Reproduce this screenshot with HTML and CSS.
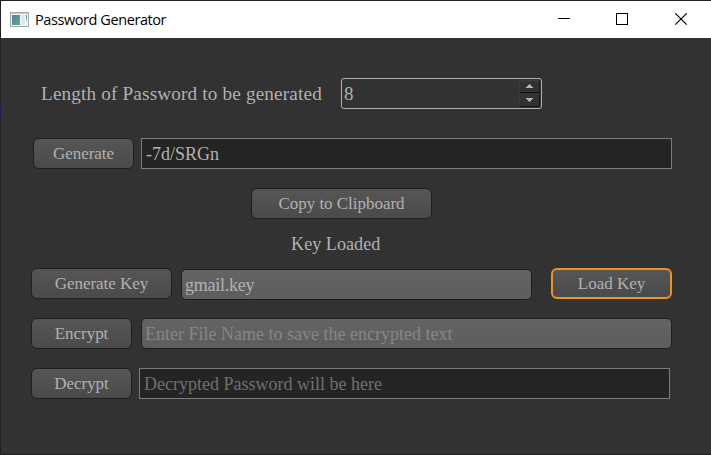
FILE: index.html
```
<!DOCTYPE html>
<html lang="en">
<head>
<meta charset="utf-8">
<title>Password Generator</title>
<link rel="stylesheet" href="styles.css">
</head>
<body>
<div class="window">
  <header class="titlebar">
    <svg class="app-icon" width="19" height="15" viewBox="0 0 19 15">
      <defs><linearGradient id="g" x1="0" y1="0" x2="1" y2="1"><stop offset="0" stop-color="#4b7ea6"/><stop offset="1" stop-color="#62b184"/></linearGradient>
      <linearGradient id="b" x1="0" y1="0" x2="0" y2="1"><stop offset="0" stop-color="#5083c0"/><stop offset="1" stop-color="#8fc8a0"/></linearGradient></defs>
      <rect x=".5" y=".5" width="18" height="14" fill="#f1f3f4" stroke="#a3a9ad"/>
      <path d="M1 1.5h17" stroke="#c5cbce"/>
      <rect x="2" y="3" width="8" height="10" fill="url(#g)"/>
      <rect x="11" y="3" width="4" height="10" fill="#e3e7e9"/>
      <rect x="16" y="3" width="1" height="6" fill="url(#b)"/>
    </svg>
    <span class="title">Password Generator</span>
    <svg class="controls" width="130" height="13" viewBox="0 0 130 13" fill="none" stroke="#000">
      <path d="M0 5.5h12"/>
      <rect x="58.5" y=".5" width="11" height="11"/>
      <path d="M117.3 .3l11.4 11.4M128.7 .3l-11.4 11.4" stroke-width="1.1"/>
    </svg>
  </header>
  <main class="content">
    <div class="row row-length">
      <span class="label length-label">Length of Password to be generated</span>
      <div class="spin">
        <span class="spin-value">8</span>
        <div class="steps">
          <div class="step"><svg width="7" height="4" viewBox="0 0 7 4" shape-rendering="crispEdges"><path d="M3 0h1v1h1v1h1v1h1v1H0V3h1V2h1V1h1z" fill="#b4b4b4"/></svg></div>
          <div class="step"><svg width="7" height="4" viewBox="0 0 7 4" shape-rendering="crispEdges"><path d="M0 0h7v1H6v1H5v1H4v1H3V3H2V2H1V1H0z" fill="#b4b4b4"/></svg></div>
        </div>
      </div>
    </div>
    <div class="row row-generate">
      <div class="button w101"><span>Generate</span></div>
      <div class="output"><span>-7d/SRGn</span></div>
    </div>
    <div class="row row-copy"><div class="button w181"><span>Copy to Clipboard</span></div></div>
    <div class="row row-status"><span class="label">Key Loaded</span></div>
    <div class="row row-key">
      <div class="button w141"><span>Generate Key</span></div>
      <div class="input key-input"><span>gmail.key</span></div>
      <div class="button focused"><span>Load Key</span></div>
    </div>
    <div class="row row-encrypt">
      <div class="button w101"><span>Encrypt</span></div>
      <div class="input placeholder"><span>Enter File Name to save the encrypted text</span></div>
    </div>
    <div class="row row-decrypt">
      <div class="button w101"><span>Decrypt</span></div>
      <div class="output hint"><span>Decrypted Password will be here</span></div>
    </div>
  </main>
  <i class="edge-mark"></i>
</div>
</body>
</html>
```
FILE: styles.css
```
* { box-sizing: border-box; }
body { margin: 0; overflow: hidden; }
.window {
  position: relative;
  width: 711px;
  height: 455px;
  border: solid #201e20;
  border-width: 1px 0 1px 1px;
  background: #323232;
  font-family: "Liberation Serif", serif;
  color: #b1b1b1;
}
.titlebar {
  display: flex;
  align-items: center;
  height: 37px;
  padding: 0 23px 0 9px;
  background: #fff;
  color: #000;
}
.title {
  margin-left: 6px;
  font: 14.5px/20px "Open Sans", sans-serif;
  letter-spacing: -0.42px;
  white-space: nowrap;
}
.controls { margin-left: auto; }
.content { padding-top: 40px; }
.row { display: flex; height: 31px; white-space: nowrap; }
.label { font-size: 18.2px; line-height: 33px; }
.length-label { width: 300px; font-size: 19.2px; line-height: 31px; letter-spacing: 0.16px; }
.row-length { margin-left: 40px; }
.row-generate { margin: 29px 0 0 32px; gap: 7px; }
.row-copy { margin: 19px 0 0 250px; }
.row-status { margin: 9px 0 0 290px; }
.row-key { margin: 9px 0 0 30px; }
.row-encrypt { margin: 19px 0 0 30px; gap: 9px; }
.row-decrypt { margin: 19px 0 0 30px; gap: 7px; }
.button {
  height: 31px;
  border: 1px solid #1e1e1e;
  border-radius: 6px;
  background: linear-gradient(#565656, #4a4a4a);
  font-size: 17px;
  line-height: 29px;
  letter-spacing: -0.03px;
  text-align: center;
}
.w101 { width: 101px; }
.w141 { width: 141px; }
.w181 { width: 181px; }
.focused {
  width: 121px;
  margin-left: 19px;
  border: 2px solid #f0941f;
  line-height: 27px;
}
.output {
  width: 531px;
  height: 31px;
  padding-left: 4px;
  border: 1px solid #7c7c7c;
  background: #242424;
  font-size: 18px;
  line-height: 30px;
}
.hint { color: #707070; }
.input {
  width: 531px;
  height: 31px;
  padding-left: 3px;
  border: 1px solid #1e1e1e;
  border-radius: 5px;
  background: linear-gradient(#646464, #5d5d5d);
  font-size: 18px;
  line-height: 30px;
}
.key-input { width: 351px; margin: 1px 0 0 9px; letter-spacing: -0.25px; }
.placeholder { color: #868686; }
.spin {
  display: flex;
  justify-content: space-between;
  width: 201px;
  height: 31px;
  padding-left: 2px;
  border: 1px solid #b1b1b1;
  border-radius: 3px;
}
.spin-value { font-size: 19px; line-height: 30px; }
.steps { width: 22px; padding-top: 1px; }
.step {
  display: flex;
  align-items: flex-start;
  justify-content: center;
  width: 21px;
  height: 13px;
  padding-top: 3px;
  margin-bottom: 1px;
  border: 1px solid #3b3b3b;
  border-right-color: #171717;
  border-bottom: 1px solid #111;
}
.edge-mark { position: absolute; left: -1px; top: 105px; width: 1px; height: 9px; background: #1b2566; }
```
